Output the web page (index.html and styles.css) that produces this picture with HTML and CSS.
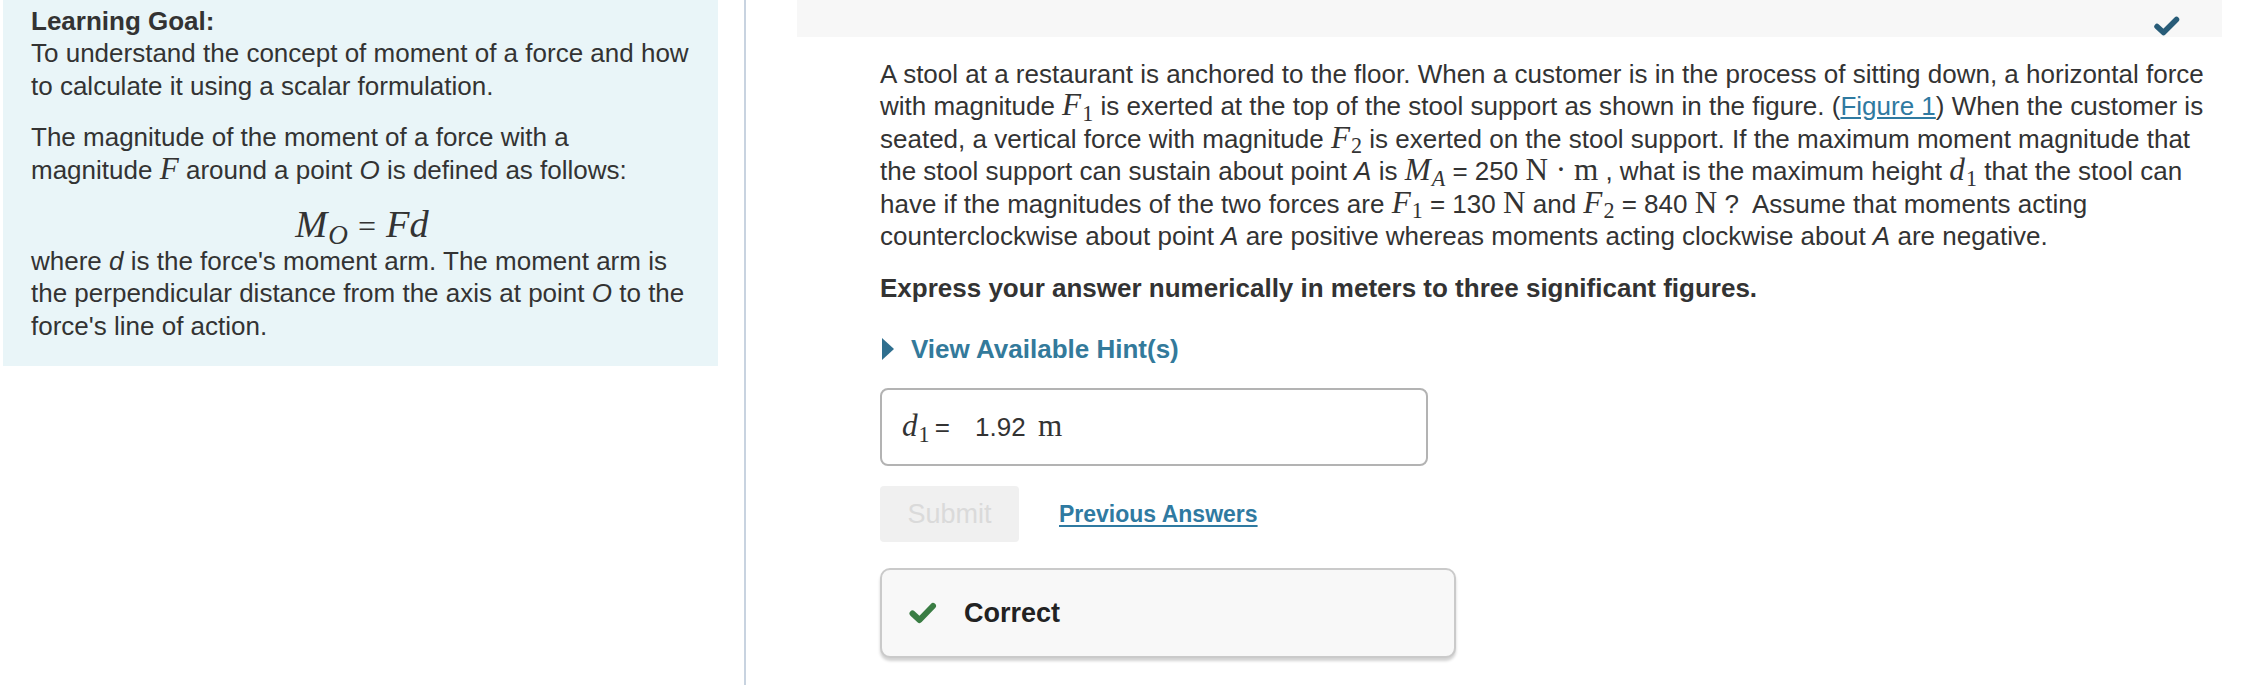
FILE: index.html
```html
<!DOCTYPE html>
<html lang="en">
  <head>
    <meta charset="UTF-8" />
    <meta name="viewport" content="width=device-width, initial-scale=1.0" />
    <title>Moment of a Force</title>
    <link rel="stylesheet" href="styles.css">
  </head>
  <body>
    <div class="page">
      <div class="intro">
        <div class="goal">
          <p>
            <b>Learning Goal:</b><br />
            To understand the concept of moment of a force and how to calculate it using a scalar formulation.
          </p>
          <p class="gap">
            The magnitude of the moment of a force with a magnitude <span class="mi">F</span> around a point <i>O</i> is defined as follows:
          </p>
          <div class="formula">
            <span class="mi">M</span><sub class="sub it">O</sub><span class="eq">=</span><span class="mi">Fd</span>
          </div>
          <p class="after">
            where <i>d</i> is the force's moment arm. The moment arm is the perpendicular distance from the axis at point <i>O</i> to the force's line of action.
          </p>
        </div>
      </div>

      <div class="work">
        <div class="toolbar">
          <svg class="done" width="26" height="20" viewBox="0 0 26 20">
            <path d="M3 10.5 L9.5 16.5 L22.5 3.5" fill="none" stroke="#285c78" stroke-width="5.5" stroke-linecap="round" stroke-linejoin="round" />
          </svg>
        </div>

        <div class="problem">
          <p>
            A stool at a restaurant is anchored to the floor. When a customer is in the process of sitting down, a horizontal force with magnitude <span class="mi">F</span><sub class="sub">1</sub> is exerted at the top of the stool support as shown in the figure. (<a href="#">Figure 1</a>) When the customer is seated, a vertical force with magnitude <span class="mi">F</span><sub class="sub">2</sub> is exerted on the stool support. If the maximum moment magnitude that the stool support can sustain about point <i>A</i> is <span class="mi">M</span><sub class="sub it">A</sub> = 250 <span class="mu">N · m</span> , what is the maximum height <span class="mi">d</span><sub class="sub">1</sub> that the stool can have if the magnitudes of the two forces are <span class="mi">F</span><sub class="sub">1</sub> = 130 <span class="mu">N</span> and <span class="mi">F</span><sub class="sub">2</sub> = 840 <span class="mu">N</span> ?&nbsp; Assume that moments acting counterclockwise about point <i>A</i> are positive whereas moments acting clockwise about <i>A</i> are negative.
          </p>

          <p class="instr">Express your answer numerically in meters to three significant figures.</p>

          <div class="hint"><span class="arrow"></span>View Available Hint(s)</div>

          <div class="answer">
            <span class="mi">d</span><sub class="sub">1</sub><span class="eqs">=</span> <span class="val">1.92</span> <span class="mu unit">m</span>
          </div>

          <div class="actions">
            <button class="submit" disabled>Submit</button>
            <a class="prev" href="#">Previous Answers</a>
          </div>

          <div class="feedback">
            <svg width="28" height="22" viewBox="0 0 28 22">
              <path d="M3.5 11.5 L10.5 18 L24 4" fill="none" stroke="#3a7d44" stroke-width="6" stroke-linecap="round" stroke-linejoin="round" />
            </svg>
            <span>Correct</span>
          </div>
        </div>
      </div>
    </div>
  </body>
</html>
```

FILE: styles.css
```css
body {
  background-color: #fff;
  color: #333;
  font-family: "Liberation Sans", Arial, Helvetica, sans-serif;
  font-size: 26px;
  line-height: 32.4px;
  margin: 0;
}

p {
  margin: 0;
}

a {
  color: #2f7aa1;
}

.page {
  display: flex;
  min-height: 685px;
}

.intro {
  border-right: 2px solid #c8d3e0;
  width: 744px;
}

.goal {
  background-color: #e9f5f8;
  box-sizing: border-box;
  margin-left: 3px;
  padding: 5px 25px 24px 28px;
  width: 715px;
}

.goal .gap {
  margin-top: 19px;
}

.goal .after {
  margin-top: 1px;
}

.formula {
  font-family: "Liberation Serif", "Times New Roman", serif;
  font-size: 32px;
  line-height: 36px;
  margin-top: 22px;
  text-align: center;
}

.formula .eq {
  margin: 0 10px;
}

.mi {
  font-family: "Liberation Serif", "Times New Roman", serif;
  font-size: 1.2em;
  font-style: italic;
  line-height: 0;
}

.mu {
  font-family: "Liberation Serif", "Times New Roman", serif;
  font-size: 1.2em;
  line-height: 0;
}

.sub {
  font-family: "Liberation Serif", "Times New Roman", serif;
  font-size: 0.85em;
  line-height: 0;
  margin-left: 1px;
  vertical-align: -0.25em;
}

.sub.it {
  font-style: italic;
}

.work {
  flex: 1;
  padding-left: 51px;
  padding-right: 43px;
}

.toolbar {
  align-items: flex-end;
  background-color: #f7f7f7;
  display: flex;
  height: 37px;
  justify-content: flex-end;
  padding-right: 42px;
}

.toolbar .done {
  margin-bottom: 1px;
}

.problem {
  padding-left: 83px;
  padding-top: 21px;
}

.instr {
  font-weight: bold;
  margin-top: 20px;
}

.hint {
  align-items: center;
  color: #337a9b;
  display: flex;
  font-weight: bold;
  margin-top: 28px;
}

.hint .arrow {
  border-bottom: 11px solid transparent;
  border-left: 12px solid #2f6f8f;
  border-top: 11px solid transparent;
  margin-left: 2px;
  margin-right: 17px;
}

.answer {
  border: 2px solid #b3b3b3;
  border-radius: 8px;
  box-sizing: border-box;
  height: 78px;
  line-height: 74px;
  margin-top: 23px;
  padding-left: 20px;
  width: 548px;
}

.answer .eqs {
  margin-left: 5px;
}

.answer .val {
  margin-left: 18px;
}

.answer .unit {
  margin-left: 5px;
}

.actions {
  align-items: center;
  display: flex;
  margin-top: 20px;
}

.submit {
  background-color: #f0f0f0;
  border: 0;
  border-radius: 4px;
  color: #dadada;
  font-family: inherit;
  font-size: 27px;
  height: 56px;
  width: 139px;
}

.prev {
  font-size: 23px;
  font-weight: bold;
  margin-left: 40px;
  text-decoration-thickness: 2px;
  text-underline-offset: 3px;
}

.feedback {
  align-items: center;
  background-color: #f8f8f8;
  border: 2px solid #cacaca;
  border-radius: 10px;
  box-shadow: 0 3px 3px rgba(0, 0, 0, 0.18);
  box-sizing: border-box;
  display: flex;
  height: 90px;
  margin-top: 26px;
  padding-left: 27px;
  width: 576px;
}

.feedback span {
  color: #222;
  font-size: 27px;
  font-weight: bold;
  margin-left: 27px;
}
```
